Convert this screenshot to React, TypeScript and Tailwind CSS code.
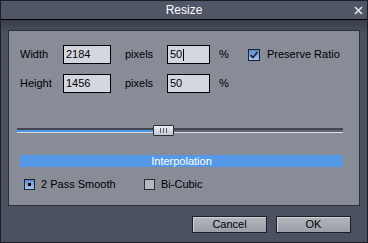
export default function App() {
  return (
    <div className="w-[368px] h-[243px] border border-[#1b1e24] bg-[#4b5160] flex flex-col font-['Liberation_Sans',Arial,sans-serif] text-[11px] leading-none text-black select-none">
      <div className="h-[19px] shrink-0 bg-[#4f5666] border-b border-black flex items-center">
        <div className="w-[24px]" />
        <div className="flex-1 text-center text-white text-[12px]">Resize</div>
        <div className="w-[24px] flex justify-center pl-[6px]">
          <svg width="9" height="9" viewBox="0 0 9 9">
            <path d="M1 1 L8 8 M8 1 L1 8" stroke="#e6e8ec" strokeWidth="1.6" />
          </svg>
        </div>
      </div>
      <div className="flex-1 flex flex-col bg-[linear-gradient(#393e48,#4b5160_14px)]">
        <div className="mt-[10px] mx-[7px] h-[176px] border border-[#2c3038] bg-[#878c97] flex flex-col">
          <div className="pt-[14px] pl-[11px] flex flex-col gap-[10px]">
            <div className="flex items-center h-[19px]">
              <div className="w-[43px]">Width</div>
              <div className="w-[48px] h-[19px] border border-black bg-[#d4d7e0] flex items-center pl-[2px]">2184</div>
              <div className="w-[56px] pl-[14px]">pixels</div>
              <div className="w-[43px] h-[19px] border border-black bg-[#d4d7e0] flex items-center pl-[2px]">
                50<span className="inline-block w-px h-[12px] bg-black ml-px" />
              </div>
              <div className="w-[38px] pl-[9px]">%</div>
              <div className="w-[12px] h-[12px] border border-[#1a2233] bg-[linear-gradient(#5d8ccc,#a8c4ea)] flex items-center justify-center">
                <svg width="10" height="10" viewBox="0 0 10 10">
                  <path d="M1.5 5 L4 7.5 L8.5 2" stroke="#1b2740" strokeWidth="1.8" fill="none" />
                </svg>
              </div>
              <div className="pl-[7px]">Preserve Ratio</div>
            </div>
            <div className="flex items-center h-[19px]">
              <div className="w-[43px]">Height</div>
              <div className="w-[48px] h-[19px] border border-black bg-[#d4d7e0] flex items-center pl-[2px]">1456</div>
              <div className="w-[56px] pl-[14px]">pixels</div>
              <div className="w-[43px] h-[19px] border border-black bg-[#d4d7e0] flex items-center pl-[2px]">50</div>
              <div className="w-[38px] pl-[9px]">%</div>
            </div>
          </div>
          <div className="mt-[32px] ml-[8px] w-[326px] h-[11px] relative flex items-center">
            <div className="w-full flex flex-col">
              <div className="h-[2px] bg-[#414652]" />
              <div className="h-[2px] flex">
                <div className="w-[136px] bg-[#4f95e6]" />
                <div className="flex-1 bg-[#5f6572]" />
              </div>
              <div className="h-px bg-[#dadde2]" />
            </div>
            <div className="absolute left-[136px] top-0 w-[21px] h-[11px] border border-[#2a2e36] rounded-[1px] bg-[linear-gradient(#eceef1,#c4c7ce)] flex items-center justify-center gap-[2px]">
              <div className="w-px h-[5px] bg-[#555a66]" />
              <div className="w-px h-[5px] bg-[#555a66]" />
              <div className="w-px h-[5px] bg-[#555a66]" />
            </div>
          </div>
          <div className="mt-[19px] ml-[11px] w-[323px] h-[12px] bg-[#5599e6] text-white flex items-center justify-center">
            Interpolation
          </div>
          <div className="mt-[11px] ml-[15px] flex items-center h-[12px]">
            <div className="w-[11px] h-[11px] border border-[#1a2233] bg-[linear-gradient(#5d8ccc,#a8c4ea)] flex items-center justify-center">
              <div className="w-[3px] h-[3px] bg-black" />
            </div>
            <div className="pl-[6px] w-[109px]">2 Pass Smooth</div>
            <div className="w-[11px] h-[11px] border border-[#2a2e36] bg-[#b4b8c0]" />
            <div className="pl-[6px]">Bi-Cubic</div>
          </div>
        </div>
        <div className="mt-[10px] mr-[16px] flex justify-end gap-[9px]">
          <div className="w-[75px] h-[17px] border border-[#1c1e23] bg-[linear-gradient(#b3b6bd,#9a9ea6)] shadow-[inset_1px_1px_0_#cfd2d7] flex items-center justify-center">Cancel</div>
          <div className="w-[75px] h-[17px] border border-[#1c1e23] bg-[linear-gradient(#b3b6bd,#9a9ea6)] shadow-[inset_1px_1px_0_#cfd2d7] flex items-center justify-center">OK</div>
        </div>
      </div>
    </div>
  );
}
